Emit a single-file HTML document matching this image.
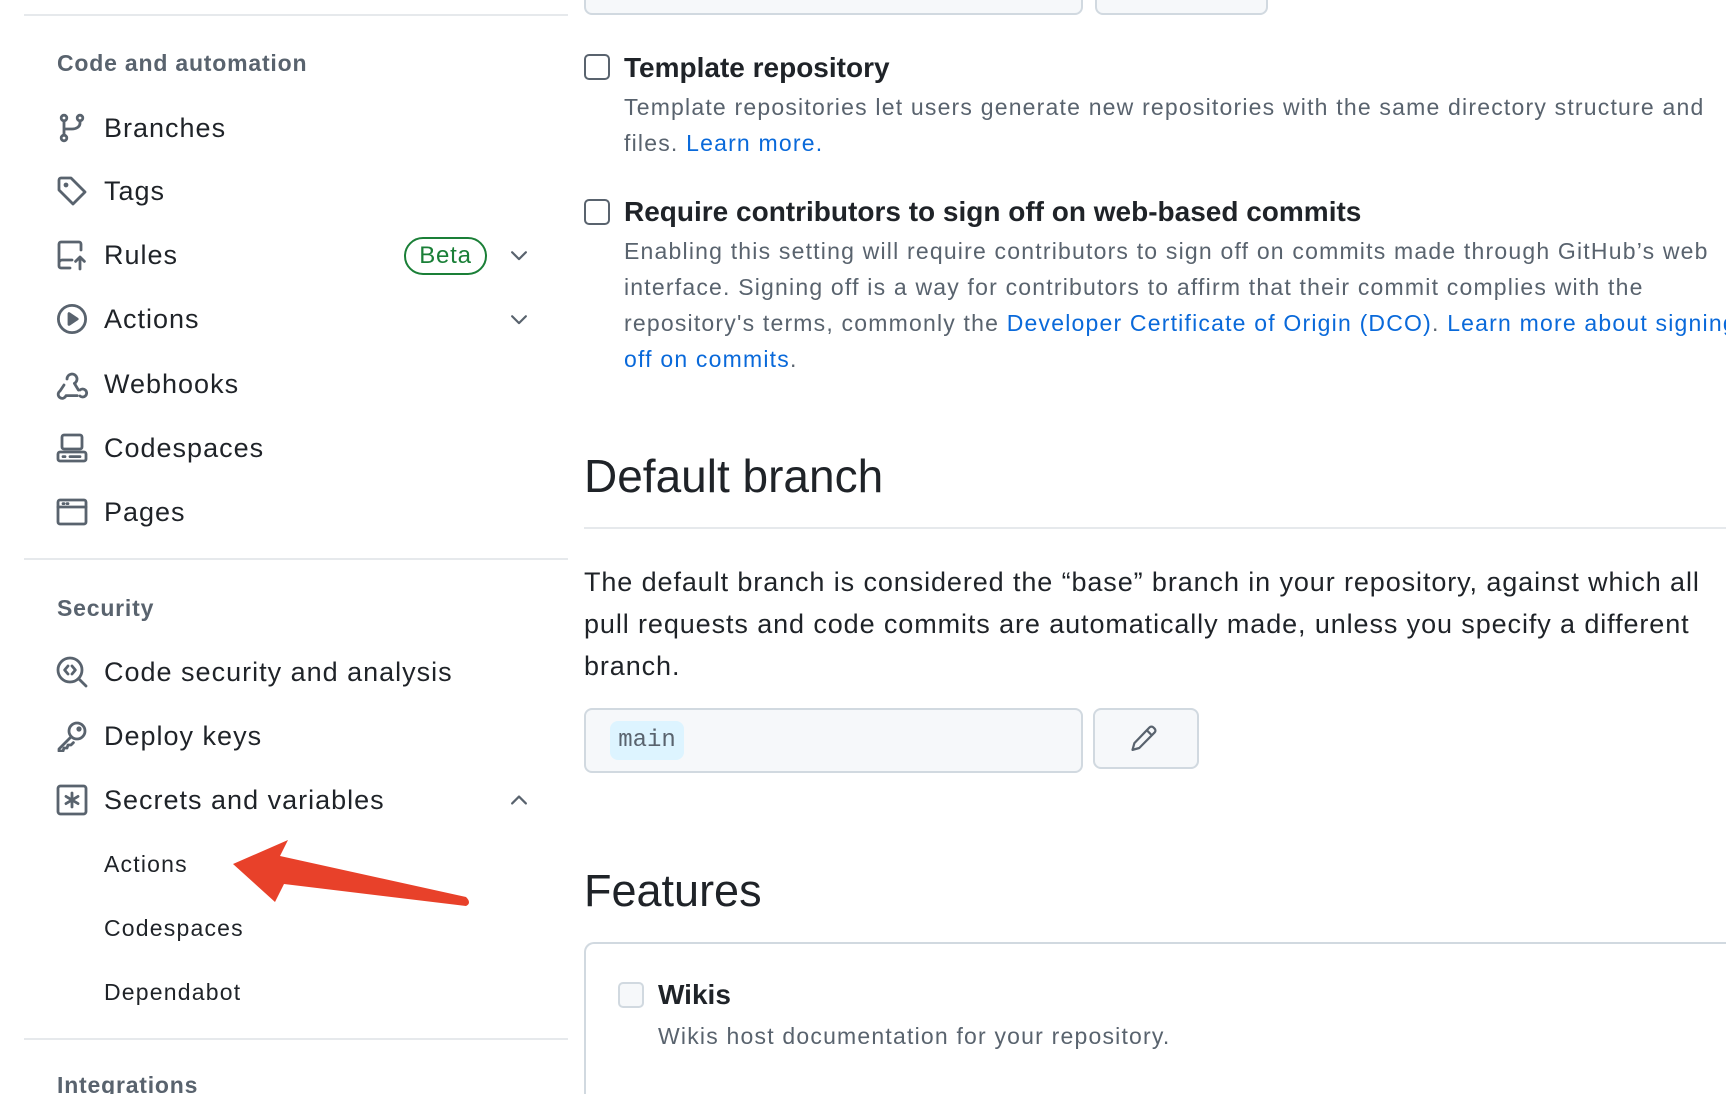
<!DOCTYPE html>
<html style="width:1726px;height:1094px;overflow:hidden"><head><meta charset="utf-8"><style>
*{margin:0;padding:0;box-sizing:border-box}
body{width:1726px;height:1094px;overflow:hidden;background:#fff;font-family:"Liberation Sans",sans-serif;color:#1f2328;position:relative}
.a{position:absolute;white-space:nowrap}
.hr{position:absolute;height:2px;background:#e6e9ec}
.sh{font-size:23px;font-weight:bold;color:#59636e;left:57px;letter-spacing:0.8px}
.ni{left:104px;font-size:27px;line-height:32px;color:#1f2328;letter-spacing:1px}
.ic{position:absolute;left:56px;width:32px;height:32px}
.ic svg{width:32px;height:32px;fill:none;stroke:#59636e;stroke-width:1.4;stroke-linecap:round;stroke-linejoin:round}
.sub{left:104px;font-size:23px;line-height:28px;letter-spacing:1.2px}
.chev{position:absolute;left:508px;width:22px;height:22px}
.cb{position:absolute;width:26px;height:26px;border:2px solid #59636e;border-radius:5px;background:#fff}
.t{font-size:28px;font-weight:bold;line-height:32px}
.d{font-size:23px;color:#59636e;line-height:36px;letter-spacing:1.2px}
a{color:#0969da;text-decoration:none}
</style></head><body>
<div class="hr" style="left:24px;top:14px;width:544px"></div>
<div class="a sh" style="top:50px">Code and automation</div>

<div class="ic" style="top:112px"><svg viewBox="0 0 16 16"><circle cx="4" cy="3" r="1.4"/><circle cx="4" cy="13" r="1.4"/><circle cx="12" cy="3" r="1.4"/><path d="M4 4.4v7.2M12 4.4v1.1c0 2-2 3-4 3H4.5"/></svg></div>
<div class="a ni" style="top:112px">Branches</div>
<div class="ic" style="top:175px"><svg viewBox="0 0 16 16"><path d="M1.5 2.5v5l7 7 6-6-7-7h-5a1 1 0 0 0-1 1z"/><circle cx="5" cy="5" r=".5" fill="#59636e"/></svg></div>
<div class="a ni" style="top:175px">Tags</div>
<div class="ic" style="top:239px"><svg viewBox="0 0 16 16"><path d="M7 14.5H2.5a1 1 0 0 1-1-1v-11a1 1 0 0 1 1-1h9a1 1 0 0 1 1 1v3M1.5 12a1.5 1.5 0 0 1 1.5-1.5h5M12 15V9M9.8 11.2 12 9l2.2 2.2"/></svg></div>
<div class="a ni" style="top:239px">Rules</div>
<div class="a" style="left:404px;top:237px;width:83px;height:38px;border:2px solid #1a7f37;border-radius:20px;color:#1a7f37;font-size:24px;line-height:34px;text-align:center;letter-spacing:0.8px">Beta</div>
<div class="chev" style="top:244px"><svg viewBox="0 0 16 16" width="22" height="22" fill="none" stroke="#59636e" stroke-width="1.6" stroke-linecap="round" stroke-linejoin="round"><path d="M3 6l5 5 5-5"/></svg></div>
<div class="ic" style="top:303px"><svg viewBox="0 0 16 16"><circle cx="8" cy="8" r="6.8"/><path d="M6.5 5.3v5.4L10.6 8z" fill="#59636e"/></svg></div>
<div class="a ni" style="top:303px">Actions</div>
<div class="chev" style="top:308px"><svg viewBox="0 0 16 16" width="22" height="22" fill="none" stroke="#59636e" stroke-width="1.6" stroke-linecap="round" stroke-linejoin="round"><path d="M3 6l5 5 5-5"/></svg></div>
<div class="ic" style="top:368px"><svg viewBox="0 0 16 16"><path d="M5.5 5.5a2.5 2.5 0 1 1 3.7 2.2l2 3.3M4 8.5 2 11.5a2 2 0 1 0 3 2.3h5.6M12 11a2 2 0 1 1 0 3"/></svg></div>
<div class="a ni" style="top:368px">Webhooks</div>
<div class="ic" style="top:432px"><svg viewBox="0 0 16 16"><rect x="3" y="1.5" width="10" height="7" rx="1"/><rect x="1" y="10" width="14" height="4.5" rx="1"/><path d="M3.5 12.3h1M7 12.3h5"/></svg></div>
<div class="a ni" style="top:432px">Codespaces</div>
<div class="ic" style="top:496px"><svg viewBox="0 0 16 16"><rect x="1" y="2" width="14" height="12" rx="1"/><path d="M1 5.5h14M3.5 3.8h.5M5.5 3.8h.5"/></svg></div>
<div class="a ni" style="top:496px">Pages</div>

<div class="hr" style="left:24px;top:558px;width:544px"></div>
<div class="a sh" style="top:595px">Security</div>
<div class="ic" style="top:656px"><svg viewBox="0 0 16 16"><circle cx="7" cy="7" r="6"/><path d="M11.3 11.3 15 15M6 5 4.3 7 6 9M8 5l1.7 2L8 9"/></svg></div>
<div class="a ni" style="top:656px">Code security and analysis</div>
<div class="ic" style="top:720px"><svg viewBox="0 0 16 16"><circle cx="10.5" cy="5.5" r="4"/><path d="M7.6 8.4 1.5 14.5v1h2l.5-1.5h1.5l.5-1.5h1.5l1.2-1.2"/><circle cx="11.5" cy="4.5" r=".6" fill="#59636e"/></svg></div>
<div class="a ni" style="top:720px">Deploy keys</div>
<div class="ic" style="top:784px"><svg viewBox="0 0 16 16"><rect x="1" y="1" width="14" height="14" rx="1.2"/><path d="M8 4.5v7M5 6.2l6 3.6M11 6.2 5 9.8"/></svg></div>
<div class="a ni" style="top:784px">Secrets and variables</div>
<div class="chev" style="top:789px"><svg viewBox="0 0 16 16" width="22" height="22" fill="none" stroke="#59636e" stroke-width="1.6" stroke-linecap="round" stroke-linejoin="round"><path d="M3 10.5l5-5 5 5"/></svg></div>
<div class="a sub" style="top:850px">Actions</div>
<div class="a sub" style="top:914px">Codespaces</div>
<div class="a sub" style="top:978px">Dependabot</div>
<div class="hr" style="left:24px;top:1038px;width:544px"></div>
<div class="a sh" style="top:1072px">Integrations</div>

<svg class="a" style="left:0;top:0" width="600" height="1094"><path d="M233 864 L288 840 L280 856 L466 897 Q472 903 466 906 L284 884 L275 902 Z" fill="#e8412a"/></svg>

<div class="a" style="left:584px;top:-20px;width:499px;height:35px;border:2px solid #d1d9e0;border-radius:8px;background:#f6f8fa"></div>
<div class="a" style="left:1095px;top:-20px;width:173px;height:35px;border:2px solid #d1d9e0;border-radius:8px;background:#f6f8fa"></div>

<div class="cb" style="left:584px;top:54px"></div>
<div class="a t" style="left:624px;top:52px">Template repository</div>
<div class="a d" style="left:624px;top:89px">Template repositories let users generate new repositories with the same directory structure and<br>files. <a>Learn more.</a></div>

<div class="cb" style="left:584px;top:199px"></div>
<div class="a t" style="left:624px;top:196px">Require contributors to sign off on web-based commits</div>
<div class="a d" style="left:624px;top:233px">Enabling this setting will require contributors to sign off on commits made through GitHub’s web<br>interface. Signing off is a way for contributors to affirm that their commit complies with the<br>repository's terms, commonly the <a>Developer Certificate of Origin (DCO)</a>. <a>Learn more about signing</a><br><a>off on commits</a>.</div>

<div class="a" style="left:584px;top:449px;font-size:46px;line-height:54px">Default branch</div>
<div class="hr" style="left:584px;top:527px;width:1142px"></div>
<div class="a" style="left:584px;top:561px;font-size:27px;line-height:42px;letter-spacing:0.9px">The default branch is considered the “base” branch in your repository, against which all<br>pull requests and code commits are automatically made, unless you specify a different<br>branch.</div>

<div class="a" style="left:584px;top:708px;width:499px;height:65px;border:2px solid #d1d9e0;border-radius:8px;background:#f6f8fa"></div>
<div class="a" style="left:610px;top:721px;width:74px;height:39px;border-radius:8px;background:#ddf4ff;font-family:'Liberation Mono',monospace;font-size:24px;line-height:39px;text-align:center;color:#59636e">main</div>
<div class="a" style="left:1093px;top:708px;width:106px;height:61px;border:2px solid #d1d9e0;border-radius:8px;background:#f6f8fa"></div>
<svg class="a" style="left:1128px;top:724px" width="30" height="30" viewBox="0 0 16 16" fill="none" stroke="#59636e" stroke-width="1.2" stroke-linejoin="round"><path d="M11.5 1.8a1.4 1.4 0 0 1 2 0l.7.7a1.4 1.4 0 0 1 0 2L6 12.8l-3.6 1 1-3.6z M10 3.3l2.7 2.7"/></svg>

<div class="a" style="left:584px;top:864px;font-size:45px;line-height:54px">Features</div>
<div class="a" style="left:584px;top:942px;width:1142px;height:152px;border:2px solid #d1d9e0;border-bottom:none;border-right:none;border-radius:10px 0 0 0"></div>
<div class="cb" style="left:618px;top:982px;border:2px solid #d1d9e0;background:#f6f8fa"></div>
<div class="a t" style="left:658px;top:979px">Wikis</div>
<div class="a d" style="left:658px;top:1018px">Wikis host documentation for your repository.</div>
</body></html>
